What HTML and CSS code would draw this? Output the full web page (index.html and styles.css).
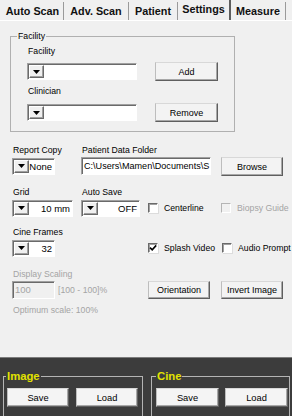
FILE: index.html
```html
<!DOCTYPE html>
<html lang="en">
<head>
  <meta charset="UTF-8">
  <meta name="viewport" content="width=device-width, initial-scale=1.0">
  <title>Settings</title>
  <link rel="stylesheet" href="styles.css">
</head>
<body>
  <div class="tabs">
    <div class="tab t1">Auto Scan</div>
    <div class="tab t2">Adv. Scan</div>
    <div class="tab t3">Patient</div>
    <div class="tab t4 active">Settings</div>
    <div class="tab t5">Measure</div>
  </div>

  <div class="page">
    <fieldset class="group">
      <legend>Facility</legend>
      <div class="inner">
        <div class="label">Facility</div>
        <div class="line">
          <div class="combo w110"><span class="drop"><svg width="7" height="4" viewBox="0 0 7 4"><polygon points="0,0 7,0 3.5,4" fill="#000"/></svg></span><span class="value"></span></div>
          <button class="btn">Add</button>
        </div>
        <div class="label second">Clinician</div>
        <div class="line">
          <div class="combo w110"><span class="drop"><svg width="7" height="4" viewBox="0 0 7 4"><polygon points="0,0 7,0 3.5,4" fill="#000"/></svg></span><span class="value"></span></div>
          <button class="btn">Remove</button>
        </div>
      </div>
    </fieldset>

    <!-- report copy / data folder -->
    <div class="row row-a">
      <div class="field">
        <div class="label">Report Copy</div>
        <div class="ctl">
          <div class="combo w43"><span class="drop"><svg width="7" height="4" viewBox="0 0 7 4"><polygon points="0,0 7,0 3.5,4" fill="#000"/></svg></span><span class="value">None</span></div>
        </div>
      </div>
      <div class="field span2">
        <div class="label">Patient Data Folder</div>
        <div class="ctl">
          <div class="textbox">C:\Users\Mamen\Documents\S</div>
        </div>
      </div>
      <div class="ctl top"><button class="btn w62 tall">Browse</button></div>
    </div>

    <div class="row row-b">
      <div class="field">
        <div class="label">Grid</div>
        <div class="ctl">
          <div class="combo w61"><span class="drop"><svg width="7" height="4" viewBox="0 0 7 4"><polygon points="0,0 7,0 3.5,4" fill="#000"/></svg></span><span class="value">10 mm</span></div>
        </div>
      </div>
      <div class="field">
        <div class="label">Auto Save</div>
        <div class="ctl">
          <div class="combo w59"><span class="drop"><svg width="7" height="4" viewBox="0 0 7 4"><polygon points="0,0 7,0 3.5,4" fill="#000"/></svg></span><span class="value">OFF</span></div>
        </div>
      </div>
      <div class="check"><span class="box"></span>Centerline</div>
      <div class="check off"><span class="box"></span>Biopsy Guide</div>
    </div>

    <div class="row row-c">
      <div class="field">
        <div class="label">Cine Frames</div>
        <div class="ctl">
          <div class="combo w43"><span class="drop"><svg width="7" height="4" viewBox="0 0 7 4"><polygon points="0,0 7,0 3.5,4" fill="#000"/></svg></span><span class="value">32</span></div>
        </div>
      </div>
      <div class="check col3"><span class="box"><svg width="8" height="8" viewBox="0 0 8 8"><path d="M1 3.6l2.2 2.2L7.2 1.4" fill="none" stroke="#000" stroke-width="1.6"/></svg></span>Splash Video</div>
      <div class="check col4"><span class="box"></span>Audio Prompt</div>
    </div>

    <div class="row row-d">
      <div class="field span2 off">
        <div class="label">Display Scaling</div>
        <div class="ctl">
          <div class="textbox disabled w43">100</div>
          <span class="range">[100 - 100]%</span>
        </div>
      </div>
      <div class="ctl"><button class="btn w62">Orientation</button></div>
      <div class="ctl"><button class="btn w62">Invert Image</button></div>
    </div>

    <div class="label optimum">Optimum scale: 100%</div>
  </div>

  <div class="bottom">
    <fieldset class="dark image">
      <legend>Image</legend>
      <div class="inner">
        <button class="btn">Save</button>
        <button class="btn">Load</button>
      </div>
    </fieldset>
    <fieldset class="dark cine">
      <legend>Cine</legend>
      <div class="inner">
        <button class="btn">Save</button>
        <button class="btn">Load</button>
      </div>
    </fieldset>
  </div>
</body>
</html>
```

FILE: styles.css
```css
body { margin: 0; width: 292px; height: 416px; overflow: hidden; display: flex; flex-direction: column; background: #f0f0f0; color: #000; font-family: "Liberation Sans", Arial, sans-serif; }

/* tab strip */
.tabs { display: flex; align-items: flex-end; height: 20px; padding-left: 2px; border-bottom: 1px solid #fff; flex: none; }
.tab { box-sizing: border-box; height: 18px; line-height: 18px; font-size: 10.8px; font-weight: bold; text-align: center; color: #111; border-right: 1px solid #9a9a9a; white-space: nowrap; }
.t1 { width: 62px; }
.t2 { width: 65px; }
.t3 { width: 49px; }
.t4 { width: 53px; }
.t5 { width: 55px; }
.tab.active { height: 20px; padding-bottom: 2px; border-right: 2px solid #5e5e5e; }

.page { flex: 1; }

/* group boxes */
fieldset { margin: 0; padding: 0; min-width: 0; box-sizing: border-box; }
.group { margin: 10px 0 0 10px; width: 225px; border: 1px solid #b0b0b0; }
.group legend { margin-left: 6px; padding: 0 1px; font-size: 8.7px; line-height: 11px; }
.group .inner { padding: 4px 0 9px 16px; }
.group .label { margin-bottom: 5px; }
.group .label.second { margin-top: 5px; margin-bottom: 6px; }
.line { display: flex; align-items: center; gap: 18px; }

.label { font-size: 8.7px; line-height: 11px; padding-left: 1px; white-space: nowrap; }

/* rows under the group */
.row { display: grid; grid-template-columns: 69px 67px 73px 1fr; padding-left: 12px; align-items: end; }
.row-a { margin-top: 13px; }
.row-b { margin-top: 12px; }
.row-c { margin-top: 10px; }
.row-d { margin-top: 12px; }
.field .label { margin-bottom: 1px; }
.span2 { grid-column: span 2; }
.col3 { grid-column: 3; }
.col4 { grid-column: 4; margin-left: 1px; }
.ctl { height: 18px; display: flex; align-items: center; }
.ctl.top { align-items: flex-start; }
.optimum { margin: 6px 0 0 12px; color: #a4a4a4; }

/* controls */
.combo { box-sizing: border-box; height: 17px; display: flex; background: #fff; border: 1px solid; border-color: #a0a0a0 #fff #fff #a0a0a0; box-shadow: inset 1px 1px #6a6a6a; }
.drop { box-sizing: border-box; width: 15px; height: 13px; margin: 1px 0 0 1px; display: flex; align-items: center; justify-content: center; background: #f0f0f0; border: 1px solid; border-color: #fff #6a6a6a #6a6a6a #fff; box-shadow: inset -1px -1px #a0a0a0; }
.value { flex: 1; text-align: right; padding-right: 2px; font-size: 9.5px; line-height: 15px; white-space: nowrap; }
.w110 { width: 110px; }
.w43 { width: 43px; }
.w61 { width: 61px; }
.w59 { width: 59px; }
.w62 { width: 62px; }

.textbox { box-sizing: border-box; width: 130px; height: 18px; padding-left: 2px; background: #fff; border: 1px solid; border-color: #a0a0a0 #fff #fff #a0a0a0; box-shadow: inset 1px 1px #6a6a6a; font-size: 9.1px; line-height: 16px; white-space: nowrap; overflow: hidden; }
.textbox.disabled { width: 43px; background: #f0f0f0; color: #a4a4a4; font-size: 9.5px; }
.range { margin-left: 3px; font-size: 8.7px; color: #a4a4a4; }
.off .label { color: #a4a4a4; }

.btn { box-sizing: border-box; width: 63px; height: 19px; padding: 0; background: #f3f3f3; border: 1px solid; border-color: #d8d8d8 #5f5f5f #5f5f5f #bdbdbd; box-shadow: inset -1px -1px #a8a8a8; font-family: inherit; font-size: 9px; color: #000; }
.btn.w62 { width: 62px; height: 18px; }
.btn.tall { height: 19px; }

.check { height: 18px; display: flex; align-items: center; gap: 6px; font-size: 8.7px; white-space: nowrap; }
.box { box-sizing: border-box; width: 10px; height: 10px; display: flex; align-items: center; justify-content: center; background: #fff; border: 1px solid; border-color: #6a6a6a #fff #fff #6a6a6a; box-shadow: inset 1px 1px #a0a0a0, 1px 1px #dcdcdc; }
.check.off { color: #a4a4a4; }
.check.off .box { background: #f0f0f0; border-color: #b4b4b4 #fff #fff #b4b4b4; box-shadow: none; }

/* dark strip, group boxes run off the bottom edge */
.bottom { flex: none; box-sizing: border-box; height: 59px; display: flex; gap: 8px; padding: 12px 0 0 3px; background: #3c3c3c; border-top: 1px solid #7c7c7c; }
.dark { height: 46px; border: 1px solid #b4b4b4; border-bottom: none; }
.dark legend { padding: 0 1px; color: #e2e200; font-size: 11.3px; font-weight: bold; line-height: 13px; }
.dark .inner { display: flex; padding-top: 5px; }
.image { width: 140px; }
.image legend { margin-left: 2px; }
.image .inner { gap: 7px; padding-left: 3px; }
.image .btn { width: 62px; }
.cine { width: 139px; }
.cine legend { margin-left: 4px; }
.cine .inner { gap: 6px; padding-left: 4px; }
.dark .btn { background: #f4f4f4; font-size: 9.3px; }
```
